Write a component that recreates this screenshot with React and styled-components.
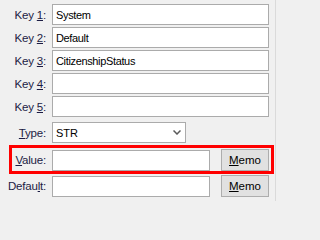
import React from 'react';
import styled, { createGlobalStyle } from 'styled-components';

const GlobalStyle = createGlobalStyle`
    html, body {
        margin: 0;
        padding: 0;
        background: #f0f0f0;
    }
    body {
        font-family: "Liberation Sans", Arial, sans-serif;
        font-size: 11px;
        color: #000;
    }
`;

const Panel = styled.div`
    width: 276px;
    height: 201px;
    box-sizing: border-box;
    border-right: 1px solid #dadada;
    padding-top: 4px;
    display: flex;
    flex-direction: column;
`;

const Row = styled.div`
    display: flex;
    align-items: center;
    height: ${ props => props.h || 21 }px;
    margin-top: ${ props => props.top || 0 }px;
`;

const Label = styled.label`
    width: ${ props => props.w || 46 }px;
    flex: none;
    text-align: right;
    margin-right: 6px;
    font-size: 11.5px;
    color: #1c1c44;
    white-space: nowrap;
    letter-spacing: -0.2px;
    u {
        text-decoration: underline;
        text-underline-offset: 1px;
    }
`;

const TextBox = styled.input`
    box-sizing: border-box;
    width: ${ props => props.w || 217 }px;
    height: 21px;
    margin: 0;
    padding: 0 3px;
    border: 1px solid #ababab;
    background: #fff;
    font: inherit;
    letter-spacing: -0.35px;
    color: #000;
    outline: none;
`;

const SelectBox = styled.div`
    box-sizing: border-box;
    width: 134px;
    height: 21px;
    border: 1px solid #ababab;
    background: #fff;
    display: flex;
    align-items: center;
    justify-content: space-between;
    padding: 0 4px 0 3px;
    color: #000;
`;

const Highlight = styled.div`
    box-sizing: border-box;
    margin: 2px 0 0 9px;
    width: 265px;
    border: 3px solid #ff0000;
    padding: 1px 0 0 0;
`;

const MemoButton = styled.button`
    box-sizing: border-box;
    width: 48px;
    height: 22px;
    margin: 0 0 0 11px;
    padding: 0;
    flex: none;
    border: 1px solid #adadad;
    background: #e1e1e1;
    font: inherit;
    font-size: 11.5px;
    color: #000;
    align-self: flex-start;
    u {
        text-decoration: underline;
    }
`;

const Chevron = () => (
    <svg width="8" height="5" viewBox="0 0 8 5">
        <path d="M0.5 0.5 L4 4 L7.5 0.5" fill="none" stroke="#5a5a5a" strokeWidth="1.5" />
    </svg>
);

const keys = [
    { n: '1', value: 'System' },
    { n: '2', value: 'Default' },
    { n: '3', value: 'CitizenshipStatus' },
    { n: '4', value: '' },
    { n: '5', value: '' },
];

export default function App() {
    return (
        <>
            <GlobalStyle />
            <Panel>
                { keys.map((k, i) => (
                    <Row key={ k.n } top={ i === 0 ? 0 : 2 }>
                        <Label>Key <u>{ k.n }</u>:</Label>
                        <TextBox defaultValue={ k.value } />
                    </Row>
                )) }
                <Row top={ 5 }>
                    <Label><u>T</u>ype:</Label>
                    <SelectBox>
                        <span>STR</span>
                        <Chevron />
                    </SelectBox>
                </Row>
                <Highlight>
                    <Row h={ 22 }>
                        <Label w={ 34 }><u>V</u>alue:</Label>
                        <TextBox w={ 158 } />
                        <MemoButton><u>M</u>emo</MemoButton>
                    </Row>
                </Highlight>
                <Row h={ 22 } top={ 1 }>
                    <Label>Defau<u>l</u>t:</Label>
                    <TextBox w={ 158 } />
                    <MemoButton><u>M</u>emo</MemoButton>
                </Row>
            </Panel>
        </>
    );
}
